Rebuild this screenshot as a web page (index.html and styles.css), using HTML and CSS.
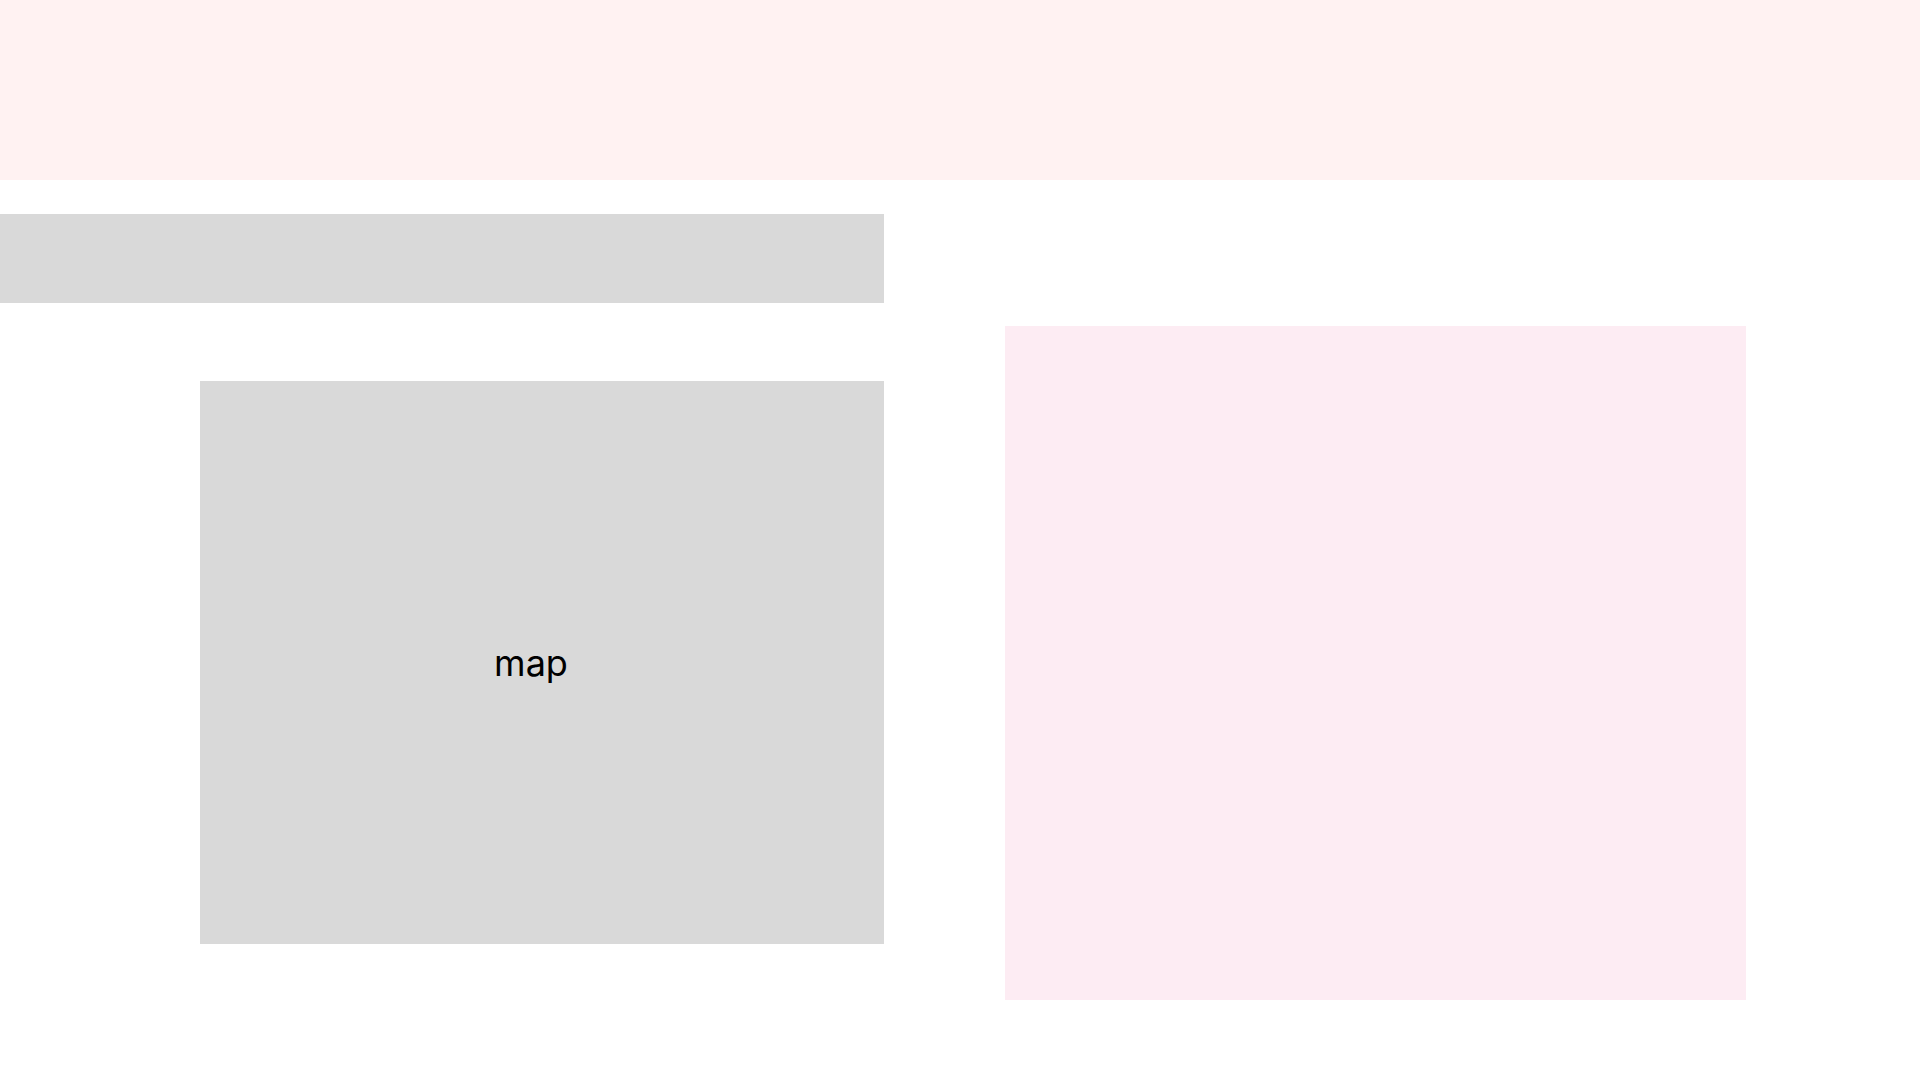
FILE: index.html
```html
<!DOCTYPE html>
<html>
<head>
<meta charset="utf-8">
<link rel="stylesheet" href="styles.css">
</head>
<body>
<header class="header"></header>
<main class="content">
  <section class="left">
    <div class="bar"></div>
    <div class="map"><span class="map-label">map</span></div>
  </section>
  <section class="right">
    <div class="panel"></div>
  </section>
</main>
</body>
</html>
```
FILE: styles.css
```css
html, body {
  margin: 0;
  padding: 0;
  background: #ffffff;
  font-family: Inter, "Noto Sans", sans-serif;
}
.header {
  height: 180px;
  background: #fff2f2;
}
.content {
  display: grid;
  grid-template-columns: 884px 741px;
  column-gap: 121px;
  align-items: start;
}
.left {
  display: flex;
  flex-direction: column;
  padding-top: 34px;
}
.bar {
  height: 89px;
  background: #d9d9d9;
}
.map {
  margin-top: 78px;
  margin-left: 200px;
  height: 563px;
  background: #d9d9d9;
  display: flex;
  align-items: center;
  justify-content: center;
  padding-right: 22px;
}
.map-label {
  font-size: 36px;
  color: #000000;
}
.right {
  padding-top: 146px;
}
.panel {
  height: 674px;
  background: #fdecf3;
}
```
